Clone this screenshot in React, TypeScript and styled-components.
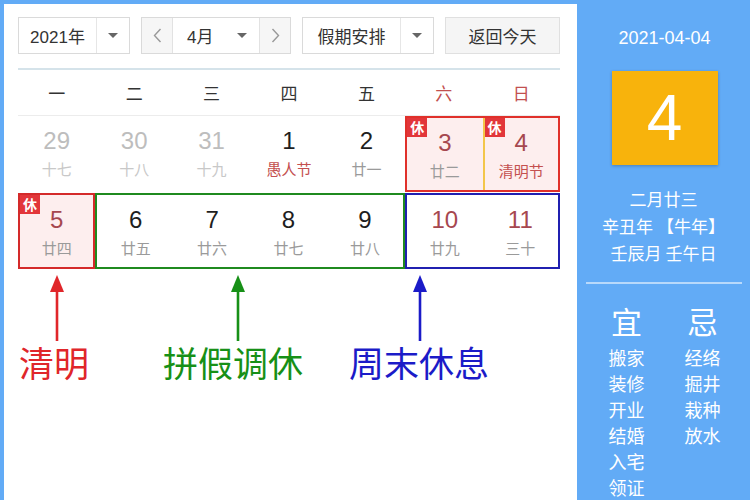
import React from "react";
import styled, { createGlobalStyle } from "styled-components";

const Global = createGlobalStyle`
  html, body { margin: 0; padding: 0; }
  body {
    width: 750px; height: 500px; overflow: hidden;
    background: #62abf6;
    font-family: "Liberation Sans", "Noto Sans CJK SC", sans-serif;
  }
  * { box-sizing: border-box; }
`;

const BLUE = "#62abf6";

const Page = styled.div`
  display: flex;
  width: 750px;
  height: 500px;
  padding: 4px 0 0 4px;
  background: ${BLUE};
`;

const Main = styled.div`
  width: 573px;
  height: 496px;
  background: #fff;
  padding: 13px 17px 0 14px;
  display: flex;
  flex-direction: column;
`;

const Toolbar = styled.div`
  display: flex;
  gap: 11px;
  height: 37px;
`;

const SelectBox = styled.div<{ $w: number }>`
  width: ${(p) => p.$w}px;
  display: flex;
  border: 1px solid #dadada;
  background: #fff;
  color: #333;
  font-size: 17px;
`;

const SelectText = styled.div`
  flex: 1;
  display: flex;
  align-items: center;
  justify-content: center;
`;

const CaretCell = styled.div<{ $divider?: boolean }>`
  width: 33px;
  display: flex;
  align-items: center;
  justify-content: center;
  border-left: ${(p) => (p.$divider ? "1px solid #e6e6e6" : "none")};
`;

const Caret = styled.span`
  width: 0;
  height: 0;
  border-left: 5px solid transparent;
  border-right: 5px solid transparent;
  border-top: 5px solid #666;
`;

const NavButton = styled.div<{ $side: "l" | "r" }>`
  width: 31px;
  display: flex;
  align-items: center;
  justify-content: center;
  background: #f6f6f6;
  ${(p) => (p.$side === "l" ? "border-right: 1px solid #e2e2e2;" : "border-left: 1px solid #e2e2e2;")}
`;

const MonthMid = styled.div`
  flex: 1;
  display: flex;
  align-items: center;
  justify-content: space-between;
  padding: 0 12px 0 14px;
`;

const ReturnButton = styled.div`
  width: 115px;
  display: flex;
  align-items: center;
  justify-content: center;
  border: 1px solid #e0e0e0;
  background: #f5f5f5;
  color: #333;
  font-size: 17px;
`;

const Rule = styled.div`
  width: 542px;
  height: 2px;
  background: #d5e3ea;
  margin-top: 14px;
`;

const WeekRow = styled.div`
  width: 542px;
  display: grid;
  grid-template-columns: repeat(7, 1fr);
  height: 46px;
  border-bottom: 1px solid #ececec;
`;

const WeekDay = styled.div<{ $red?: boolean }>`
  display: flex;
  align-items: center;
  justify-content: center;
  font-size: 17px;
  color: ${(p) => (p.$red ? "#c2504f" : "#333")};
`;

const Grid = styled.div`
  width: 542px;
  display: grid;
  grid-template-columns: repeat(7, 1fr);
  grid-auto-rows: 76px;
  row-gap: 1px;
`;

const Group = styled.div<{ $span: number; $color: string; $bg?: string }>`
  grid-column: span ${(p) => p.$span};
  display: grid;
  grid-template-columns: repeat(${(p) => p.$span}, 1fr);
  border: 2px solid ${(p) => p.$color};
  background: ${(p) => p.$bg || "transparent"};
`;

const Cell = styled.div<{ $today?: boolean }>`
  position: relative;
  display: flex;
  flex-direction: column;
  align-items: center;
  padding-top: 11px;
  ${(p) => (p.$today ? "border-left: 2px solid #f3c64a;" : "")}
`;

const Num = styled.div<{ $tone: "normal" | "faded" | "rest" }>`
  font-size: 24px;
  line-height: 28px;
  color: ${(p) => (p.$tone === "faded" ? "#bdbdbd" : p.$tone === "rest" ? "#a6474f" : "#1e1e1e")};
`;

const Lunar = styled.div<{ $tone: "normal" | "faded" | "fest" }>`
  margin-top: 4px;
  font-size: 15px;
  line-height: 20px;
  font-family: "Noto Sans CJK SC", sans-serif;
  color: ${(p) => (p.$tone === "faded" ? "#c8c8c8" : p.$tone === "fest" ? "#c4504f" : "#9a9a9a")};
`;

const RestBadge = styled.span`
  position: absolute;
  top: 0;
  left: 0;
  width: 20px;
  height: 19px;
  background: #e2363a;
  color: #fff;
  font-size: 14px;
  line-height: 19px;
  text-align: center;
  font-family: "Noto Sans CJK SC", sans-serif;
  font-weight: 700;
`;

const Notes = styled.div`
  display: flex;
  margin-top: 6px;
`;

const Note = styled.div<{ $w: number; $ml: number; $shift: number }>`
  width: ${(p) => p.$w}px;
  margin-left: ${(p) => p.$ml}px;
  display: flex;
  flex-direction: column;
  align-items: center;
  & > svg { margin-left: ${(p) => p.$shift}px; }
`;

const NoteText = styled.div<{ $color: string }>`
  margin-top: 1px;
  font-family: "Noto Sans CJK SC", sans-serif;
  font-size: 35px;
  line-height: 40px;
  white-space: nowrap;
  color: ${(p) => p.$color};
`;

const Side = styled.div`
  flex: 1;
  display: flex;
  flex-direction: column;
  align-items: center;
  padding-top: 23px;
  color: #fff;
  font-family: "Liberation Sans", "Noto Sans CJK SC", sans-serif;
`;

const SideDate = styled.div`
  font-size: 18px;
  line-height: 22px;
  margin-left: 2px;
`;

const DayBox = styled.div`
  margin-top: 22px;
  margin-left: 2px;
  width: 106px;
  height: 96px;
  background: #f8b30c;
  box-shadow: 0 1px 3px rgba(0, 0, 0, 0.25);
  display: flex;
  align-items: center;
  justify-content: center;
  font-size: 64px;
  color: #fff;
`;

const LunarInfo = styled.div`
  margin-top: 20px;
  font-family: "Noto Sans CJK SC", sans-serif;
  font-size: 17px;
  line-height: 27px;
  text-align: center;
  white-space: nowrap;
`;

const SideRule = styled.div`
  margin-top: 16px;
  width: 156px;
  height: 2px;
  background: rgba(255, 255, 255, 0.55);
`;

const Almanac = styled.div`
  margin-top: 22px;
  display: flex;
  gap: 38px;
  margin-left: 2px;
`;

const AlmanacCol = styled.div`
  width: 38px;
  display: flex;
  flex-direction: column;
  align-items: center;
  font-family: "Noto Sans CJK SC", sans-serif;
`;

const AlmanacHead = styled.div`
  font-size: 31px;
  line-height: 30px;
  margin-bottom: 8px;
`;

const AlmanacItem = styled.div`
  font-size: 18px;
  line-height: 26px;
  white-space: nowrap;
`;

const Chevron = ({ dir }: { dir: "l" | "r" }) => (
  <svg width="9" height="15" viewBox="0 0 9 15">
    <path
      d={dir === "l" ? "M7.5 1 L1.5 7.5 L7.5 14" : "M1.5 1 L7.5 7.5 L1.5 14"}
      fill="none"
      stroke="#999"
      strokeWidth="1.4"
    />
  </svg>
);

const Arrow = ({ color }: { color: string }) => (
  <svg width="16" height="66" viewBox="0 0 16 66">
    <polygon points="8,0 1,17 15,17" fill={color} />
    <line x1="8" y1="14" x2="8" y2="66" stroke={color} strokeWidth="2.6" />
  </svg>
);

type Day = {
  n: number;
  lunar: string;
  tone?: "normal" | "faded" | "rest";
  lunarTone?: "normal" | "faded" | "fest";
  rest?: boolean;
  today?: boolean;
};

const DayCell = ({ d }: { d: Day }) => (
  <Cell $today={d.today}>
    {d.rest && <RestBadge>休</RestBadge>}
    <Num $tone={d.tone || "normal"}>{d.n}</Num>
    <Lunar $tone={d.lunarTone || "normal"}>{d.lunar}</Lunar>
  </Cell>
);

const row1: Day[] = [
  { n: 29, lunar: "十七", tone: "faded", lunarTone: "faded" },
  { n: 30, lunar: "十八", tone: "faded", lunarTone: "faded" },
  { n: 31, lunar: "十九", tone: "faded", lunarTone: "faded" },
  { n: 1, lunar: "愚人节", lunarTone: "fest" },
  { n: 2, lunar: "廿一" },
];
const holiday: Day[] = [
  { n: 3, lunar: "廿二", tone: "rest", rest: true },
  { n: 4, lunar: "清明节", tone: "rest", lunarTone: "fest", rest: true, today: true },
];
const work: Day[] = [
  { n: 6, lunar: "廿五" },
  { n: 7, lunar: "廿六" },
  { n: 8, lunar: "廿七" },
  { n: 9, lunar: "廿八" },
];
const weekend: Day[] = [
  { n: 10, lunar: "廿九", tone: "rest" },
  { n: 11, lunar: "三十", tone: "rest" },
];

const weekdays = ["一", "二", "三", "四", "五", "六", "日"];
const yi = ["搬家", "装修", "开业", "结婚", "入宅", "领证"];
const ji = ["经络", "掘井", "栽种", "放水"];

export default function App() {
  return (
    <>
      <Global />
      <Page>
        <Main>
          <Toolbar>
            <SelectBox $w={112}>
              <SelectText>2021年</SelectText>
              <CaretCell $divider>
                <Caret />
              </CaretCell>
            </SelectBox>
            <SelectBox $w={150}>
              <NavButton $side="l">
                <Chevron dir="l" />
              </NavButton>
              <MonthMid>
                <span>4月</span>
                <Caret />
              </MonthMid>
              <NavButton $side="r">
                <Chevron dir="r" />
              </NavButton>
            </SelectBox>
            <SelectBox $w={132}>
              <SelectText>假期安排</SelectText>
              <CaretCell $divider>
                <Caret />
              </CaretCell>
            </SelectBox>
            <ReturnButton>返回今天</ReturnButton>
          </Toolbar>
          <Rule />
          <WeekRow>
            {weekdays.map((w, i) => (
              <WeekDay key={w} $red={i >= 5}>
                {w}
              </WeekDay>
            ))}
          </WeekRow>
          <Grid>
            {row1.map((d) => (
              <DayCell key={d.n} d={d} />
            ))}
            <Group $span={2} $color="#e0302a" $bg="#fdeeee">
              {holiday.map((d) => (
                <DayCell key={d.n} d={d} />
              ))}
            </Group>
            <Group $span={1} $color="#d42a2a" $bg="#fdeeee">
              <DayCell d={{ n: 5, lunar: "廿四", tone: "rest", rest: true }} />
            </Group>
            <Group $span={4} $color="#1f8a1f">
              {work.map((d) => (
                <DayCell key={d.n} d={d} />
              ))}
            </Group>
            <Group $span={2} $color="#2020b0">
              {weekend.map((d) => (
                <DayCell key={d.n} d={d} />
              ))}
            </Group>
          </Grid>
          <Notes>
            <Note $w={72} $ml={0} $shift={6}>
              <Arrow color="#e0262a" />
              <NoteText $color="#e0262a">清明</NoteText>
            </Note>
            <Note $w={140} $ml={73} $shift={9}>
              <Arrow color="#179017" />
              <NoteText $color="#179017">拼假调休</NoteText>
            </Note>
            <Note $w={138} $ml={47} $shift={2}>
              <Arrow color="#1b1bc8" />
              <NoteText $color="#1b1bc8">周末休息</NoteText>
            </Note>
          </Notes>
        </Main>
        <Side>
          <SideDate>2021-04-04</SideDate>
          <DayBox>4</DayBox>
          <LunarInfo>
            二月廿三
            <br />
            辛丑年 【牛年】
            <br />
            壬辰月 壬午日
          </LunarInfo>
          <SideRule />
          <Almanac>
            <AlmanacCol>
              <AlmanacHead>宜</AlmanacHead>
              {yi.map((t) => (
                <AlmanacItem key={t}>{t}</AlmanacItem>
              ))}
            </AlmanacCol>
            <AlmanacCol>
              <AlmanacHead>忌</AlmanacHead>
              {ji.map((t) => (
                <AlmanacItem key={t}>{t}</AlmanacItem>
              ))}
            </AlmanacCol>
          </Almanac>
        </Side>
      </Page>
    </>
  );
}
